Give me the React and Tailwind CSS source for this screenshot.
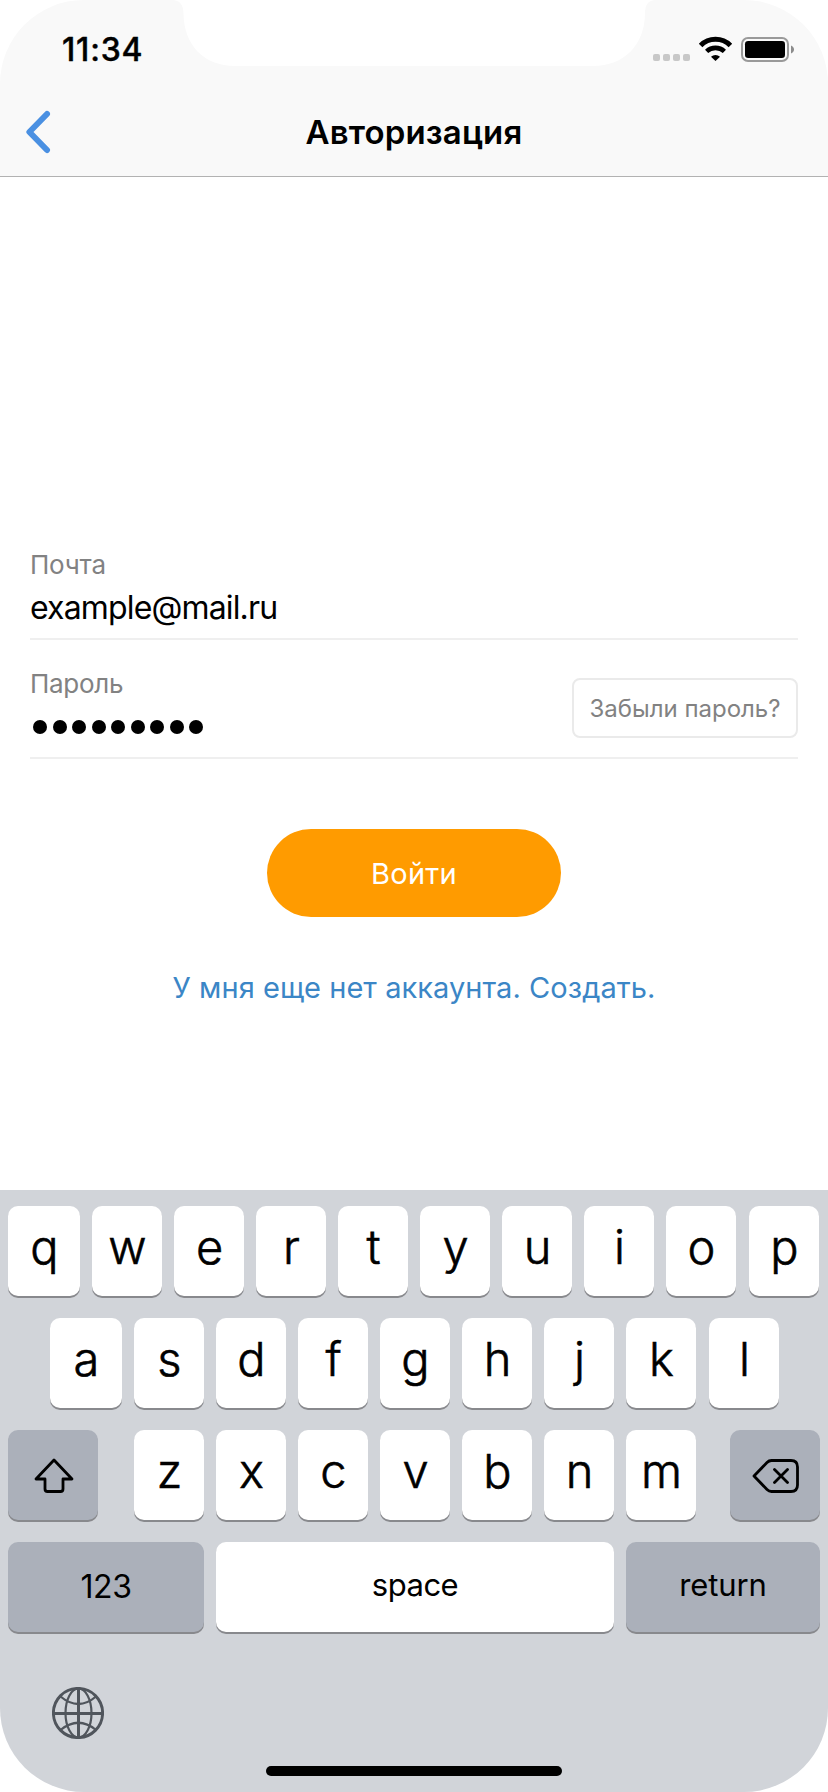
import React from "react";

const CORNER = "rounded-[84px]";

function Key({ children, className = "w-[70px]", tone = "bg-white" }) {
  return (
    <button className={`flex h-[90px] shrink-0 items-center justify-center rounded-[10px] shadow-[0_2px_0_#88898d] ${tone} ${className}`}>
      {children}
    </button>
  );
}

function Letter({ c, className }) {
  return (
    <Key className={className}>
      <span className="-mt-[8px] ml-px text-[47px] leading-[60px] font-light [-webkit-text-stroke:0.6px_#000]">{c}</span>
    </Key>
  );
}

function LetterRow({ letters, className }) {
  return (
    <div className={`flex gap-3 ${className}`}>
      {letters.split("").map((c, i) => (
        <Letter
          key={c}
          c={c}
          className={i === 0 ? "w-[72px]" : i === letters.length - 1 ? "ml-px w-[70px]" : "w-[70px]"}
        />
      ))}
    </div>
  );
}

function StatusIcons() {
  return (
    <svg className="mt-9 h-[26px] w-[142px]" viewBox="653 36 142 26" fill="none">
      {[653, 663, 673, 683].map((x) => (
        <rect key={x} x={x} y="54" width="7" height="7" rx="2" fill="#c8c8c8" />
      ))}
      <path d="M700.6 45.4 A21 21 0 0 1 730.4 45.4" stroke="#000" strokeWidth="5" />
      <path d="M706.6 51.4 A13 13 0 0 1 724.4 51.4" stroke="#000" strokeWidth="4.6" />
      <path d="M711 56.8 A6.6 6.6 0 0 1 720 56.8 L715.5 61 Z" fill="#000" />
      <rect x="742" y="38" width="46" height="23" rx="6" stroke="#9a9a9a" strokeWidth="2" />
      <rect x="745" y="41" width="40" height="17" rx="3.2" fill="#000" />
      <path d="M791 45.5 C795 47 795 52 791 53.5 Z" fill="#8c8c8c" />
    </svg>
  );
}

function Globe() {
  return (
    <svg className="h-[52px] w-[52px]" viewBox="0 0 52 52" fill="none" stroke="#50555c">
      <circle cx="26" cy="26" r="24.6" strokeWidth="2.9" />
      <path d="M26.5 1 V51 M1 26.5 H51" strokeWidth="3" />
      <ellipse cx="26.5" cy="26" rx="13" ry="24.5" strokeWidth="2.2" />
      <path d="M8.5 9.5 Q26.5 24.5 44 9.5 M8.5 43 Q26.5 28.5 44 43" strokeWidth="2.2" />
    </svg>
  );
}

export default function App() {
  return (
    <div className="h-[1792px] w-[828px] bg-white font-['Inter',sans-serif] text-black">
      <div className={`relative flex h-full flex-col overflow-hidden bg-white ${CORNER}`}>
        <svg className="absolute top-0 left-[172px] h-[66px] w-[484px]" viewBox="172 0 484 66" fill="#fff">
          <path d="M172 0 C180 0 183.5 5 183.5 14 C184 45 204 66 235 66 H593 C624 66 644.5 45 645 14 C645 5 648 0 656 0 Z" />
        </svg>

        <header className="h-[177px] shrink-0 border-b border-[#b2b2b2] bg-[#f9f9f9]">
          <div className="flex h-[99px] items-start justify-between pr-[33px] pl-[62px]">
            <span className="mt-[30px] text-[32px] leading-10 font-medium tracking-[0.8px] [-webkit-text-stroke:0.4px_#000]">11:34</span>
            <StatusIcons />
          </div>
          <div className="grid h-[66px] grid-cols-[1fr_auto_1fr] items-center px-[25px]">
            <svg className="h-[44px] w-[26px]" viewBox="0 0 26 44" fill="none" stroke="#4a90e2" strokeWidth="6" strokeLinecap="round" strokeLinejoin="round">
              <path d="M22 4 L4.4 22 L22 40" />
            </svg>
            <h1 className="text-[33px] leading-10 font-semibold tracking-[0.15px]">Авторизация</h1>
          </div>
        </header>

        <main className="flex flex-1 flex-col items-center px-[30px] pt-[368px]">
          <div className="flex h-[95px] w-full flex-col border-b-2 border-[#efefef]">
            <label className="text-[26px] leading-10 tracking-[-0.2px] text-[#828282]">Почта</label>
            <span className="mt-px text-[32px] leading-[44px] tracking-[-0.85px]">example@mail.ru</span>
          </div>
          <div className="mt-6 flex h-[95px] w-full justify-between border-b-2 border-[#efefef]">
            <div>
              <label className="block text-[26px] leading-10 tracking-[-0.3px] text-[#828282]">Пароль</label>
              <div className="mt-[16px] ml-[3px] flex gap-[5.5px]">
                {Array.from({ length: 9 }, (_, i) => (
                  <i key={i} className="size-[14px] rounded-full bg-black" />
                ))}
              </div>
            </div>
            <button className="mt-[14px] h-[60px] w-[226px] rounded-lg border-2 border-[#eaeaea] pt-px text-[24px] text-[#828282]">
              Забыли пароль?
            </button>
          </div>
          <button className="mt-[70px] h-[88px] w-[294px] rounded-full bg-[#ff9b00] pt-px text-[29px] tracking-[0.3px] text-white">Войти</button>
          <a className="mt-[51px] text-[29px] leading-10 tracking-[0.06px] text-[#3b86c6]">У мня еще нет аккаунта. Создать.</a>
        </main>

        <section className="flex h-[602px] shrink-0 flex-col bg-[#d1d4d9] pt-4">
          <LetterRow letters="qwertyuiop" className="pl-2" />
          <LetterRow letters="asdfghjkl" className="mt-[22px] pl-[50px]" />
          <div className="mt-[22px] flex pl-2">
            <Key className="w-[90px]" tone="bg-[#abb0ba]">
              <svg className="mt-0.5 ml-0.5 h-[36px] w-[40px]" viewBox="0 0 40 36" fill="none" stroke="#000" strokeWidth="2.8" strokeLinejoin="round">
                <path d="M20 2 L38 21 H29 V31 Q29 33.5 26.5 33.5 H13.5 Q11 33.5 11 31 V21 H2 Z" />
              </svg>
            </Key>
            <div className="mr-[34px] ml-9 flex gap-3">
              {"zxcvbnm".split("").map((c) => (
                <Letter key={c} c={c} className="w-[70px]" />
              ))}
            </div>
            <Key className="w-[90px]" tone="bg-[#abb0ba]">
              <svg className="mt-0.5 ml-0.5 h-[34px] w-[48px]" viewBox="0 0 48 34" fill="none" stroke="#000" strokeWidth="2.8" strokeLinecap="round" strokeLinejoin="round">
                <path d="M2 17 L15 3.5 Q17 1.5 19.5 1.5 H39 Q45.5 1.5 45.5 8 V26 Q45.5 32.5 39 32.5 H19.5 Q17 32.5 15 30.5 Z M22.5 10.5 L35.5 23.5 M35.5 10.5 L22.5 23.5" />
              </svg>
            </Key>
          </div>
          <div className="mt-[22px] flex gap-3 pl-2">
            <Key className="w-[196px] text-[32px] tracking-[-0.4px]" tone="bg-[#abb0ba]">123</Key>
            <Key className="w-[398px] pb-[3px] text-[31px] tracking-[-0.5px]">space</Key>
            <Key className="w-[194px] pb-[3px] text-[31px] tracking-[-0.1px]" tone="bg-[#abb0ba]">return</Key>
          </div>
          <div className="mt-[55px] pl-[52px]">
            <Globe />
          </div>
          <div className="mx-auto mt-[27px] h-[10px] w-[296px] rounded-full bg-black" />
        </section>
      </div>
    </div>
  );
}
